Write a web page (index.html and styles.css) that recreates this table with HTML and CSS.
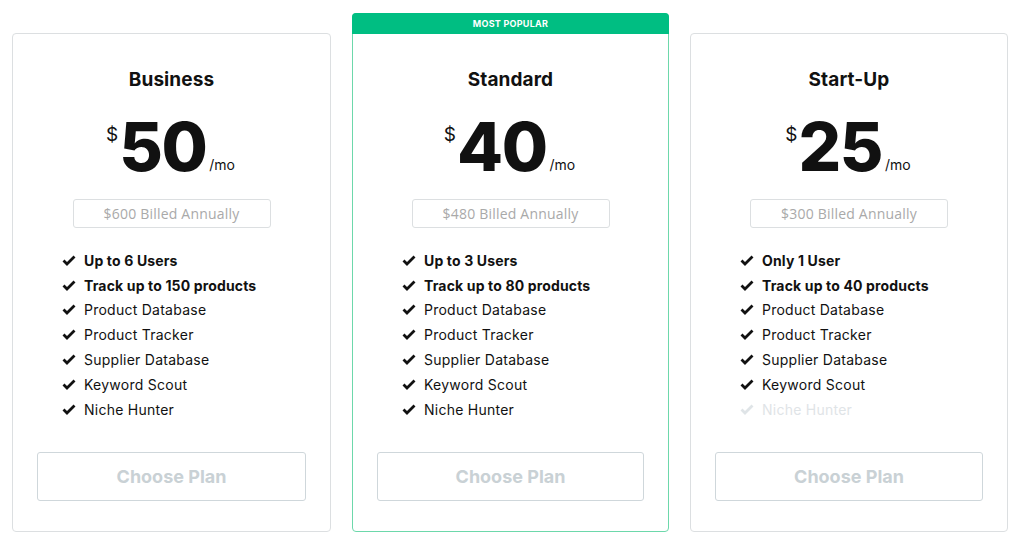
FILE: index.html
```html
<!DOCTYPE html>
<html>
<head>
<meta charset="utf-8">
<link rel="stylesheet" href="styles.css">
</head>
<body>
<div class="plans">
  <div class="card card-first">
    <h2 class="title">Business</h2>
    <div class="price"><span class="cur">$</span><span class="amount">50</span><span class="per">/mo</span></div>
    <div class="billed">$600 Billed Annually</div>
    <ul class="features">
      <li class="strong"><svg class="chk" viewBox="0 0 14 11"><path d="M1.5 5.5 L5 9 L12.5 1.5"/></svg>Up to 6 Users</li>
      <li class="strong"><svg class="chk" viewBox="0 0 14 11"><path d="M1.5 5.5 L5 9 L12.5 1.5"/></svg>Track up to 150 products</li>
      <li><svg class="chk" viewBox="0 0 14 11"><path d="M1.5 5.5 L5 9 L12.5 1.5"/></svg>Product Database</li>
      <li><svg class="chk" viewBox="0 0 14 11"><path d="M1.5 5.5 L5 9 L12.5 1.5"/></svg>Product Tracker</li>
      <li><svg class="chk" viewBox="0 0 14 11"><path d="M1.5 5.5 L5 9 L12.5 1.5"/></svg>Supplier Database</li>
      <li><svg class="chk" viewBox="0 0 14 11"><path d="M1.5 5.5 L5 9 L12.5 1.5"/></svg>Keyword Scout</li>
      <li><svg class="chk" viewBox="0 0 14 11"><path d="M1.5 5.5 L5 9 L12.5 1.5"/></svg>Niche Hunter</li>
    </ul>
    <button class="choose">Choose Plan</button>
  </div>
  <div class="card featured">
    <div class="badge">MOST POPULAR</div>
    <h2 class="title">Standard</h2>
    <div class="price"><span class="cur">$</span><span class="amount">40</span><span class="per">/mo</span></div>
    <div class="billed">$480 Billed Annually</div>
    <ul class="features">
      <li class="strong"><svg class="chk" viewBox="0 0 14 11"><path d="M1.5 5.5 L5 9 L12.5 1.5"/></svg>Up to 3 Users</li>
      <li class="strong"><svg class="chk" viewBox="0 0 14 11"><path d="M1.5 5.5 L5 9 L12.5 1.5"/></svg>Track up to 80 products</li>
      <li><svg class="chk" viewBox="0 0 14 11"><path d="M1.5 5.5 L5 9 L12.5 1.5"/></svg>Product Database</li>
      <li><svg class="chk" viewBox="0 0 14 11"><path d="M1.5 5.5 L5 9 L12.5 1.5"/></svg>Product Tracker</li>
      <li><svg class="chk" viewBox="0 0 14 11"><path d="M1.5 5.5 L5 9 L12.5 1.5"/></svg>Supplier Database</li>
      <li><svg class="chk" viewBox="0 0 14 11"><path d="M1.5 5.5 L5 9 L12.5 1.5"/></svg>Keyword Scout</li>
      <li><svg class="chk" viewBox="0 0 14 11"><path d="M1.5 5.5 L5 9 L12.5 1.5"/></svg>Niche Hunter</li>
    </ul>
    <button class="choose">Choose Plan</button>
  </div>
  <div class="card">
    <h2 class="title">Start-Up</h2>
    <div class="price"><span class="cur">$</span><span class="amount">25</span><span class="per">/mo</span></div>
    <div class="billed">$300 Billed Annually</div>
    <ul class="features">
      <li class="strong"><svg class="chk" viewBox="0 0 14 11"><path d="M1.5 5.5 L5 9 L12.5 1.5"/></svg>Only 1 User</li>
      <li class="strong"><svg class="chk" viewBox="0 0 14 11"><path d="M1.5 5.5 L5 9 L12.5 1.5"/></svg>Track up to 40 products</li>
      <li><svg class="chk" viewBox="0 0 14 11"><path d="M1.5 5.5 L5 9 L12.5 1.5"/></svg>Product Database</li>
      <li><svg class="chk" viewBox="0 0 14 11"><path d="M1.5 5.5 L5 9 L12.5 1.5"/></svg>Product Tracker</li>
      <li><svg class="chk" viewBox="0 0 14 11"><path d="M1.5 5.5 L5 9 L12.5 1.5"/></svg>Supplier Database</li>
      <li><svg class="chk" viewBox="0 0 14 11"><path d="M1.5 5.5 L5 9 L12.5 1.5"/></svg>Keyword Scout</li>
      <li class="off"><svg class="chk" viewBox="0 0 14 11"><path d="M1.5 5.5 L5 9 L12.5 1.5"/></svg>Niche Hunter</li>
    </ul>
    <button class="choose">Choose Plan</button>
  </div>
</div>
</body>
</html>
```
FILE: styles.css
```css
* { box-sizing: border-box; }
html, body { margin: 0; background: #ffffff; }
body { font-family: "Inter", "Noto Sans", sans-serif; color: #111; }

.plans {
  display: flex;
  align-items: flex-end;
  gap: 21px;
  padding: 13px 16px 0 12px;
}

.card {
  width: 318px;
  border: 1px solid #dcdfe1;
  border-radius: 4px;
  display: flex;
  flex-direction: column;
  align-items: center;
  padding: 0 24px 30px;
  background: #fff;
}
.card.card-first { width: 319px; }

.card.featured {
  width: 317px;
  border-color: #6dd8ab;
}

.badge {
  align-self: stretch;
  margin: -1px -25px 0;
  height: 21px;
  background: #00be82;
  color: #fff;
  border-radius: 4px 4px 0 0;
  font-size: 9px;
  font-weight: 700;
  letter-spacing: 0.25px;
  text-align: center;
  line-height: 21px;
}

.title {
  margin: 34px 0 0;
  font-size: 19px;
  line-height: 24px;
  font-weight: 700;
  letter-spacing: 0.1px;
}

.price {
  display: flex;
  align-items: flex-start;
  margin-top: 21px;
  height: 68px;
  margin-left: -2px;
}
.cur {
  font-size: 19px;
  line-height: 22px;
  margin-top: 11px;
  margin-right: 1px;
}
.amount {
  font-size: 67px;
  line-height: 68px;
  font-weight: 800;
  letter-spacing: -1.5px;
}
.per {
  font-size: 14px;
  align-self: flex-end;
  line-height: 16px;
  margin-left: 3px;
  margin-bottom: 8px;
}

.billed {
  margin-top: 18px;
  width: 198px;
  height: 29px;
  border: 1px solid #dcdfe1;
  border-radius: 3px;
  text-align: center;
  line-height: 27px;
  font-family: "Open Sans", "Liberation Sans", sans-serif;
  font-size: 14px;
  letter-spacing: 0.2px;
  color: #a9a9a9;
}

.features {
  list-style: none;
  margin: 20px 0 0;
  padding: 0 0 0 25px;
  align-self: stretch;
}
.features li {
  display: flex;
  align-items: center;
  height: 24.8px;
  font-size: 14px;
  letter-spacing: 0.25px;
  color: #111;
}
.features li.strong { font-weight: 700; letter-spacing: 0.15px; }
.features li.off { color: #dfe4e7; }
.chk {
  width: 14px;
  height: 11px;
  margin-right: 8px;
  flex: none;
  fill: none;
  stroke: currentColor;
  stroke-width: 2.8;
  stroke-linejoin: miter;
}

.choose {
  margin-top: 30px;
  align-self: stretch;
  height: 49px;
  background: #fff;
  border: 1px solid #cfd7db;
  border-radius: 3px;
  font-family: "Inter", "Noto Sans", sans-serif;
  font-size: 18px;
  font-weight: 700;
  color: #c9d1d5;
}
```
